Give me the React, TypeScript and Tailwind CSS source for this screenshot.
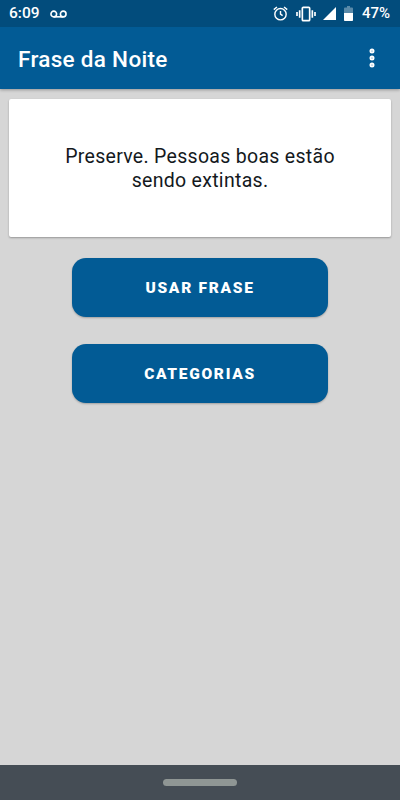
import React from "react";
import { EllipsisVertical } from "lucide-react";

// ===========================================================

function StatusIcons() {
    return (
        <div className="flex items-center">
            {/* alarm */}
            <svg width="17" height="17" viewBox="0 0 24 24" fill="none" stroke="#fff" strokeWidth="2" className="mr-[7px]">
                <circle cx="12" cy="13" r="8" />
                <path d="M12 8.500V13l3 2" />
                <path d="M2.500 6.500 7 2.800M21.500 6.500 17 2.800" />
            </svg>
            {/* vibrate */}
            <svg width="20" height="16" viewBox="0 0 30 24" fill="none" stroke="#fff" className="mr-[7px]">
                <rect x="9.500" y="2" width="11" height="20" rx="1.500" strokeWidth="2.500" />
                <path d="M5.500 6.500v11M24.500 6.500v11" strokeWidth="2.500" />
                <path d="M1.500 9v6M28.500 9v6" strokeWidth="2.500" />
            </svg>
            {/* signal */}
            <svg width="13" height="13" viewBox="0 0 13 13" className="mr-[8px]">
                <path d="M13 0v13H0z" fill="#fff" />
            </svg>
            {/* battery */}
            <svg width="9" height="15" viewBox="0 0 9 15" className="mr-[9px]">
                <path d="M3 0h3v1.500h2a1 1 0 0 1 1 1V14a1 1 0 0 1-1 1H1a1 1 0 0 1-1-1V2.500a1 1 0 0 1 1-1h2z" fill="#fff" fillOpacity="0.35" />
                <path d="M0 7h9v7a1 1 0 0 1-1 1H1a1 1 0 0 1-1-1z" fill="#fff" />
            </svg>
            <span className="text-[15px] font-medium text-white">47%</span>
        </div>
    );
}

function ActionButton({ label }: { label: string }) {
    return (
        <button className="w-[256px] h-[59px] pt-[2px] rounded-[14px] bg-[#025b95] shadow-[0_1px_2px_rgba(0,0,0,0.25)] text-white text-[15.500px] font-black tracking-[1.700px]">
            {label}
        </button>
    );
}

export default function App() {
    return (
        <div className="w-[400px] h-[800px] flex flex-col bg-[#d6d6d6] font-['Roboto',sans-serif]">
            <header className="shadow-[0_1px_3px_rgba(0,0,0,0.3)]">
                <div className="h-[27px] pl-[9px] pr-[10px] flex items-center justify-between bg-[#024c7c]">
                    <div className="flex items-center gap-[10px]">
                        <span className="text-[15.500px] font-medium text-white">6:09</span>
                        <svg width="17" height="10" viewBox="0 0 18 10" fill="none" stroke="#fff" strokeWidth="1.700">
                            <circle cx="4" cy="5" r="3" />
                            <circle cx="14" cy="5" r="3" />
                            <path d="M4 8h10" />
                        </svg>
                    </div>
                    <StatusIcons />
                </div>
                <div className="h-[62px] pl-[18px] pr-[17px] flex items-center justify-between bg-[#025b95]">
                    <span className="pt-[3px] text-[22.500px] font-medium text-white tracking-[0.3px]">Frase da Noite</span>
                    <EllipsisVertical size={24} color="#fff" strokeWidth={3} className="-mr-[1px]" />
                </div>
            </header>

            <main className="flex-1 flex flex-col items-center px-[9px] pt-[10px]">
                <div className="w-full h-[138px] px-[40px] pt-[2px] flex items-center justify-center rounded-[2px] bg-white shadow-[0_1px_2px_rgba(0,0,0,0.3)]">
                    <p className="text-center text-[19.500px] leading-[24px] text-[#14191d] tracking-[0.3px]">
                        Preserve. Pessoas boas estão sendo extintas.
                    </p>
                </div>
                <div className="mt-[21px] flex flex-col gap-[27px]">
                    <ActionButton label="USAR FRASE" />
                    <ActionButton label="CATEGORIAS" />
                </div>
            </main>

            <footer className="h-[35px] flex items-center justify-center bg-[#454d55]">
                <div className="w-[74px] h-[7px] rounded-full bg-[#8f9694]" />
            </footer>
        </div>
    );
}
